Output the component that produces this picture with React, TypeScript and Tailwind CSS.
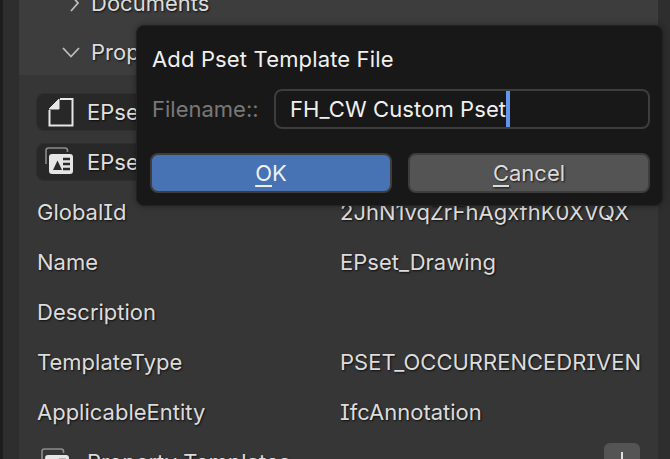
const shadow = "[text-shadow:1px_1px_2px_rgba(0,0,0,0.75)]";

function NewFileIcon() {
  return (
    <svg width="28" height="30" viewBox="0 0 28 30" className="shrink-0">
      <path d="M13 2H25.5V28.5H2.5V13" fill="none" stroke="#e6e6e6" strokeWidth="2" />
      <path d="M12 2V12H2Z" fill="#e6e6e6" stroke="#e6e6e6" strokeLinejoin="round" />
    </svg>
  );
}

function PsetIcon() {
  return (
    <svg width="30" height="30" viewBox="2 1 30 30" className="shrink-0 overflow-visible">
      <path d="M2 18V4.5Q2 2 4.5 2H21Q23.5 2 23.5 4.5V6" fill="none" stroke="#8c8c8c" strokeWidth="1.6" />
      <rect x="5" y="8" width="24" height="20" rx="3" fill="#e6e6e6" />
      <path d="M9 24L13.5 14.5L18 24Z" fill="#2a2a2a" />
      <path d="M19 13H26M19 18H26M19 23H26" stroke="#2a2a2a" strokeWidth="2.4" />
    </svg>
  );
}

function Chevron({ open }: { open?: boolean }) {
  return (
    <svg width="20" height="20" viewBox="0 0 20 20" className="shrink-0">
      <path
        d={open ? "M2 6L10 14.5L18 6" : "M6 2L13 10L6 18"}
        fill="none"
        stroke="#bdbdbd"
        strokeWidth="1.8"
      />
    </svg>
  );
}

function FileButton({ icon }: { icon: React.ReactNode }) {
  return (
    <div className="h-[38px] mx-[17px] flex items-center gap-[12px] pl-[9px] rounded-[8px] bg-[#282828] border border-[#2f2f2f]">
      <div className="w-[29px] flex justify-center">{icon}</div>
      <span className={`text-[#e0e0e0] ${shadow}`}>EPset_Drawing</span>
    </div>
  );
}

function PropRow({ label, value }: { label: string; value?: string }) {
  return (
    <div className={`h-[50px] flex items-center pl-[18px] text-[#dcdcdc] whitespace-nowrap ${shadow}`}>
      <span className="w-[303px]">{label}</span>
      <span>{value}</span>
    </div>
  );
}

export default function App() {
  return (
    <div className="relative w-[670px] h-[459px] overflow-hidden flex bg-[#2e2e2e] text-[22px] leading-none font-['Inter',sans-serif] [font-feature-settings:'cv08']">
      <div className="w-[3px] bg-[#1d1d1d]" />
      <div className="w-[16px] bg-[#2e2e2e]" />

      <main className="w-[639px] bg-[#363636] flex flex-col">
        <header className="h-[75px] shrink-0 bg-[#3d3d3d] relative text-[#dcdcdc]">
          <div className={`h-[6px] flex items-center gap-[6px] pl-[46px] ${shadow}`}>
            <div className="h-[8px] flex items-center">
              <Chevron />
            </div>
            <span>Documents</span>
          </div>
          <div className={`mt-[36px] h-[20px] flex items-center gap-[10px] pl-[42px] ${shadow}`}>
            <Chevron open />
            <span>Property Set Templates</span>
          </div>
        </header>

        <div className="pt-[18px] flex flex-col gap-[12px]">
          <FileButton icon={<NewFileIcon />} />
          <FileButton icon={<PsetIcon />} />
        </div>

        <div className="mt-[6px]">
          <PropRow label="GlobalId" value="2JhN1vqZrFhAgxfhK0XVQX" />
          <PropRow label="Name" value="EPset_Drawing" />
          <PropRow label="Description" />
          <PropRow label="TemplateType" value="PSET_OCCURRENCEDRIVEN" />
          <PropRow label="ApplicableEntity" value="IfcAnnotation" />
        </div>

        <div className="mt-[6px] flex items-start pl-[23px] pr-[18px] text-[#dcdcdc]">
          <div className="w-[29px] mt-[5px] flex justify-center">
            <PsetIcon />
          </div>
          <span className={`ml-[16px] mt-[8px] ${shadow}`}>Property Templates</span>
          <div className="ml-auto w-[36px] h-[34px] rounded-[6px] bg-[#545454] flex justify-center pt-[9px]">
            <div className="w-[2px] h-[18px] bg-[#e0e0e0]" />
          </div>
        </div>
      </main>

      {/* Dialog sits over the panel */}
      <section className="absolute left-[136px] top-[25px] w-[527px] h-[181px] rounded-[8px] bg-[#181818] border border-[#222222] pl-[14px] shadow-[0_0_6px_rgba(0,0,0,0.35)]">
        <h1 className="mt-[22px] h-[21px] pl-[1px] flex items-center text-[#f0f0f0] tracking-[0.15px]">Add Pset Template File</h1>

        <div className="mt-[20px] flex items-center">
          <span className="w-[123px] pl-[1px] text-[#787878]">Filename::</span>
          <div className="w-[376px] h-[40px] rounded-[8px] border-2 border-[#3d3d3d] flex items-center pl-[14px] text-[#f0f0f0] tracking-[0.1px]">
            <span>FH_CW Custom Pset</span>
            <span className="w-[4px] h-[36px] bg-[#6495ed]" />
          </div>
        </div>

        <div className="mt-[24px] flex gap-[16px] -ml-[1px]">
          <button className="w-[242px] h-[40px] rounded-[8px] bg-[#4772b3] border-2 border-[#3d3d3d] text-[#f0f0f0]">
            <span className="underline underline-offset-[4px] decoration-[1.5px] [text-decoration-skip-ink:none]">O</span>K
          </button>
          <button className={`w-[242px] h-[40px] rounded-[8px] bg-[#545454] border-2 border-[#3d3d3d] text-[#dcdcdc] ${shadow}`}>
            <span className="underline underline-offset-[4px] decoration-[1.5px] [text-decoration-skip-ink:none]">C</span>ancel
          </button>
        </div>
      </section>
    </div>
  );
}
